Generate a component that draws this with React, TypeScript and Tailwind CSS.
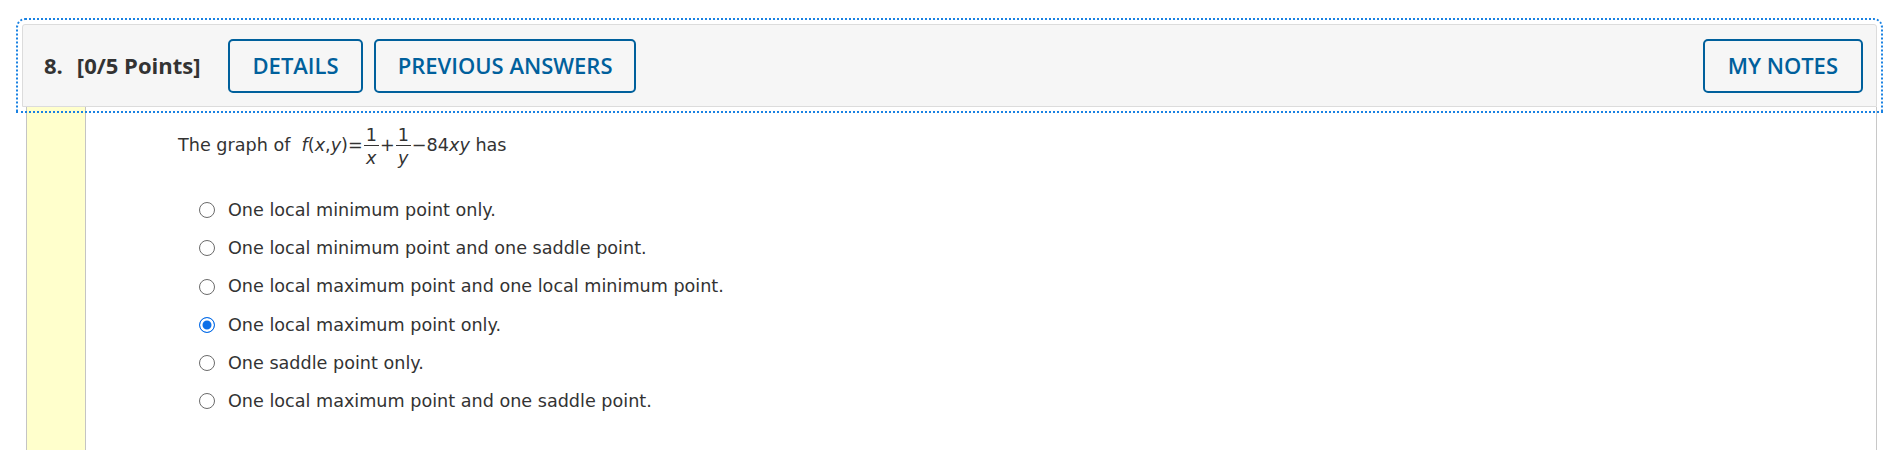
import React from "react";

const options = [
  "One local minimum point only.",
  "One local minimum point and one saddle point.",
  "One local maximum point and one local minimum point.",
  "One local maximum point only.",
  "One saddle point only.",
  "One local maximum point and one saddle point.",
];

function Frac({ den }: { den: string }) {
  return (
    <span className="inline-flex flex-col items-center align-[10px] mx-[1px]">
      <span className="leading-none px-[2px] border-b border-[#333]">1</span>
      <span className="leading-none pt-[4px] italic">{den}</span>
    </span>
  );
}

export default function App() {
  return (
    <div className="bg-white min-h-[450px] pt-[24px] pl-[22px] pr-[20px]">
      <div className="flex items-center h-[83px] bg-[#f6f6f6] border border-[#dcdcdc] rounded-t-[3px] pl-[21px] pr-[13px] outline-2 outline-dotted outline-[#1a82e2] outline-offset-[4px] font-['Open_Sans',sans-serif]">
        <span className="text-[22px] font-bold text-[#333]">
          8.<span className="ml-[14px]">[0/5 Points]</span>
        </span>
        <button className="ml-[28px] h-[54px] px-[22px] border-2 border-[#00609c] rounded-[5px] text-[22px] font-semibold text-[#00609c]">
          DETAILS
        </button>
        <button className="ml-[11px] h-[54px] px-[22px] border-2 border-[#00609c] rounded-[5px] text-[22px] font-semibold text-[#00609c]">
          PREVIOUS ANSWERS
        </button>
        <button className="ml-auto h-[54px] px-[23px] border-2 border-[#00609c] rounded-[5px] text-[22px] font-semibold text-[#00609c]">
          MY NOTES
        </button>
      </div>

      <div className="flex ml-[4px] min-h-[343px] border-r border-[#c8c8c8] font-['DejaVu_Sans',Verdana,sans-serif] text-[17.6px] text-[#333]">
        <div className="w-[60px] shrink-0 bg-[#ffffcc] border-x border-[#c4c4c4]" />
        <div className="flex-1 pl-[92px] pt-[20px]">
          <p>
            The graph of&nbsp;{" "}
            <span className="italic">f</span>(<span className="italic">x</span>,<span className="italic">y</span>)=
            <Frac den="x" />+<Frac den="y" />
            −84<span className="italic">xy</span> has
          </p>
          <div className="mt-[24px] ml-[21px] flex flex-col">
            {options.map((o, i) => (
              <label key={o} className="flex items-center h-[38.2px]">
                <input
                  type="radio"
                  name="q8"
                  defaultChecked={i === 3}
                  className="appearance-none shrink-0 m-0 w-[16px] h-[16px] rounded-full bg-white border border-[#6b6b6b] checked:border-[1.5px] checked:border-[#0b6fe8] checked:bg-[#0b6fe8] checked:shadow-[inset_0_0_0_2.5px_white]"
                />
                <span className="ml-[13px]">{o}</span>
              </label>
            ))}
          </div>
        </div>
      </div>
    </div>
  );
}
